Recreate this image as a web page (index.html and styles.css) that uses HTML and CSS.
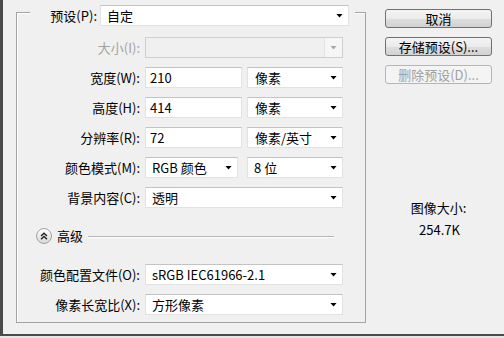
FILE: index.html
```html
<!DOCTYPE html>
<html lang="zh-CN">
<head>
  <meta charset="UTF-8">
  <title>新建</title>
  <link rel="stylesheet" href="styles.css">
</head>
<body>
  <div class="window">
    <!-- Settings group -->
    <div class="group">
      <div class="preset-row">
        <label class="preset-label">预设(P):</label>
        <div class="field select preset-select"><span>自定</span><span class="arrow"></span></div>
      </div>

      <div class="row is-disabled">
        <label class="lbl">大小(I):</label>
        <div class="field select disabled-select w-full">
          <span class="empty"></span>
          <span class="arrow-box"><span class="arrow"></span></span>
        </div>
      </div>

      <div class="row">
        <label class="lbl">宽度(W):</label>
        <div class="field input w-num">210</div>
        <div class="field select w-unit"><span>像素</span><span class="arrow"></span></div>
      </div>

      <div class="row">
        <label class="lbl">高度(H):</label>
        <div class="field input w-num">414</div>
        <div class="field select w-unit"><span>像素</span><span class="arrow"></span></div>
      </div>

      <div class="row">
        <label class="lbl">分辨率(R):</label>
        <div class="field input w-num">72</div>
        <div class="field select w-unit"><span>像素/英寸</span><span class="arrow"></span></div>
      </div>

      <div class="row">
        <label class="lbl">颜色模式(M):</label>
        <div class="field select w-mode"><span>RGB 颜色</span><span class="arrow"></span></div>
        <div class="field select w-bits"><span>8 位</span><span class="arrow"></span></div>
      </div>

      <div class="row">
        <label class="lbl">背景内容(C):</label>
        <div class="field select w-full"><span>透明</span><span class="arrow"></span></div>
      </div>

      <!-- Advanced section -->
      <div class="advanced">
        <svg class="toggle" width="16" height="16" viewBox="0 0 16 16">
          <defs>
            <linearGradient id="tg" x1="0" y1="0" x2="0" y2="1">
              <stop offset="0" stop-color="#ffffff"/>
              <stop offset="1" stop-color="#d8d8d8"/>
            </linearGradient>
          </defs>
          <circle cx="8" cy="8" r="7.5" fill="url(#tg)" stroke="#a3a3a3"/>
          <polyline points="5,8 8,5.2 11,8" fill="none" stroke="#222" stroke-width="1.4"/>
          <polyline points="5,11.2 8,8.4 11,11.2" fill="none" stroke="#222" stroke-width="1.4"/>
        </svg>
        <span class="adv-title">高级</span>
        <span class="adv-line"></span>
      </div>

      <div class="row row-profile">
        <label class="lbl">颜色配置文件(O):</label>
        <div class="field select w-full"><span>sRGB IEC61966-2.1</span><span class="arrow"></span></div>
      </div>

      <div class="row">
        <label class="lbl">像素长宽比(X):</label>
        <div class="field select w-full"><span>方形像素</span><span class="arrow"></span></div>
      </div>
    </div>

    <!-- Buttons and image size -->
    <div class="side">
      <button class="btn">取消</button>
      <button class="btn">存储预设(S)...</button>
      <button class="btn" disabled>删除预设(D)...</button>
      <div class="info">
        <div>图像大小:</div>
        <div class="info-value">254.7K</div>
      </div>
    </div>
  </div>
</body>
</html>
```

FILE: styles.css
```css
body {
  margin: 0;
  background-color: #e6e6e6;
  font-family: "Noto Sans CJK SC", "Liberation Sans", sans-serif;
  font-size: 13px;
  color: #000;
  overflow: hidden;
}

.window {
  width: 504px;
  height: 336px;
  box-sizing: border-box;
  background-color: #f0f0f0;
  border-left: 3px solid #4a4a4a;
  border-bottom: 2px solid #4a4a4a;
  display: flex;
  align-items: flex-start;
}

/* Group box */
.group {
  margin: 12px 0 0 13px;
  width: 350px;
  height: 311px;
  box-sizing: border-box;
  border: 1px solid #a3a3a3;
  box-shadow: inset 1px 1px 0 #fff;
}

.preset-row {
  display: flex;
  justify-content: flex-end;
  align-items: center;
  gap: 3px;
  margin: -9px 0 0 13px;
  width: 325px;
  height: 23px;
  padding-right: 6px;
  box-sizing: border-box;
  background-color: #f0f0f0;
}

.preset-select {
  width: 249px;
  height: 23px;
}

.row {
  display: flex;
  align-items: center;
  height: 21px;
  margin-top: 9px;
}

.row.is-disabled {
  margin-top: 10px;
}

.lbl {
  width: 123px;
  margin-right: 5px;
  text-align: right;
  white-space: nowrap;
  line-height: 21px;
}

.is-disabled .lbl {
  color: #a3a3a3;
}

/* Fields */
.field {
  height: 21px;
  box-sizing: border-box;
  background-color: #fff;
  border: 1px solid #e2e2e2;
  border-top-color: #c3c3c3;
  line-height: 19px;
  white-space: nowrap;
}

.input {
  padding-left: 4px;
}

.select {
  display: flex;
  align-items: center;
  justify-content: space-between;
  padding: 0 5px 0 6px;
}

.arrow {
  width: 7px;
  height: 4px;
  background-color: #000;
  clip-path: polygon(0 0, 100% 0, 50% 100%);
}

.disabled-select {
  background-color: #f0f0f0;
  border-color: #cfcfcf;
  padding: 0;
}

.arrow-box {
  width: 17px;
  height: 19px;
  display: flex;
  align-items: center;
  justify-content: center;
  background-color: #f6f6f6;
  border-left: 1px solid #e4e4e4;
}

.arrow-box .arrow {
  background-color: #a8a8a8;
}

.w-full { width: 198px; }
.w-num { width: 97px; }
.w-unit { width: 96px; margin-left: 5px; padding-left: 7px; }
.w-mode { width: 93px; }
.w-bits { width: 96px; margin-left: 9px; }

/* Advanced header */
.advanced {
  display: flex;
  align-items: center;
  height: 16px;
  margin-top: 20px;
  padding-left: 19px;
}

.adv-title {
  margin-left: 5px;
  line-height: 16px;
}

.adv-line {
  flex: 1;
  height: 1px;
  margin: 0 31px 0 5px;
  background-color: #b4b4b4;
  box-shadow: 0 1px 0 #fff;
}

.row-profile {
  margin-top: 20px;
}

/* Right column */
.side {
  margin-left: 19px;
  padding-top: 9px;
  width: 107px;
  display: flex;
  flex-direction: column;
  gap: 9px;
}

.btn {
  height: 19px;
  padding: 0;
  font-family: inherit;
  font-size: 13px;
  line-height: 17px;
  color: #000;
  border: 1px solid #707070;
  border-radius: 3px;
  background: linear-gradient(#f4f4f4 0%, #ebebeb 50%, #dedede 51%, #d2d2d2 100%);
}

.btn:disabled {
  color: #a0a0a0;
  border-color: #b5b5b5;
  background: #f4f4f4;
}

.info {
  margin-top: 106px;
  text-align: center;
  line-height: 18px;
}

.info-value {
  margin-top: 4px;
  padding-left: 2px;
}
```
